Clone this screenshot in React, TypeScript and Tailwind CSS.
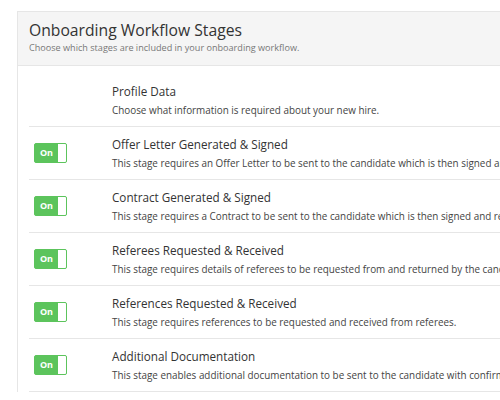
import React from "react";

const stages = [
  {
    title: "Offer Letter Generated & Signed",
    text: "This stage requires an Offer Letter to be sent to the candidate which is then signed and returned.",
  },
  {
    title: "Contract Generated & Signed",
    text: "This stage requires a Contract to be sent to the candidate which is then signed and returned.",
  },
  {
    title: "Referees Requested & Received",
    text: "This stage requires details of referees to be requested from and returned by the candidate.",
  },
  {
    title: "References Requested & Received",
    text: "This stage requires references to be requested and received from referees.",
  },
  {
    title: "Additional Documentation",
    text: "This stage enables additional documentation to be sent to the candidate with confirmation of receipt.",
  },
];

const Toggle = () => (
  <div className="flex h-[20px] w-[33px] rounded-[2px] border border-[#5cc45c] bg-[#5cc45c]">
    <span className="flex flex-1 items-center justify-center text-[9px] font-bold text-white">On</span>
    <span className="w-[8px] rounded-r-[1px] bg-white" />
  </div>
);

export default function App() {
  return (
    <div className="h-[400px] w-[500px] overflow-hidden bg-white pl-[17px] pt-[11px] font-['Open_Sans',sans-serif]">
      <div className="w-[640px] border-l border-t border-[#e6e6e6]">
        <div className="h-[54px] border-b border-[#e6e6e6] bg-[#f5f5f5] px-[11px] pt-[7px]">
          <h1 className="text-[15.7px] leading-[22px] text-[#333]">Onboarding Workflow Stages</h1>
          <p className="text-[9.1px] leading-[14px] text-[#777]">
            Choose which stages are included in your onboarding workflow.
          </p>
        </div>
        <div className="pl-[11px] pt-[8px]">
          <div className="flex h-[53px] items-center border-b border-[#e6e6e6] pl-[5px]">
            <div className="w-[78px]" />
            <div>
              <div className="text-[11.7px] leading-[19px] text-[#333]">Profile Data</div>
              <div className="text-[9.9px] leading-[18px] text-[#444]">
                Choose what information is required about your new hire.
              </div>
            </div>
          </div>
          {stages.map((s) => (
            <div key={s.title} className="flex h-[53px] items-center border-b border-[#e6e6e6] pl-[5px]">
              <div className="w-[78px]">
                <Toggle />
              </div>
              <div className="whitespace-nowrap">
                <div className="text-[11.7px] leading-[19px] text-[#333]">{s.title}</div>
                <div className="text-[9.9px] leading-[18px] text-[#444]">{s.text}</div>
              </div>
            </div>
          ))}
        </div>
      </div>
    </div>
  );
}
